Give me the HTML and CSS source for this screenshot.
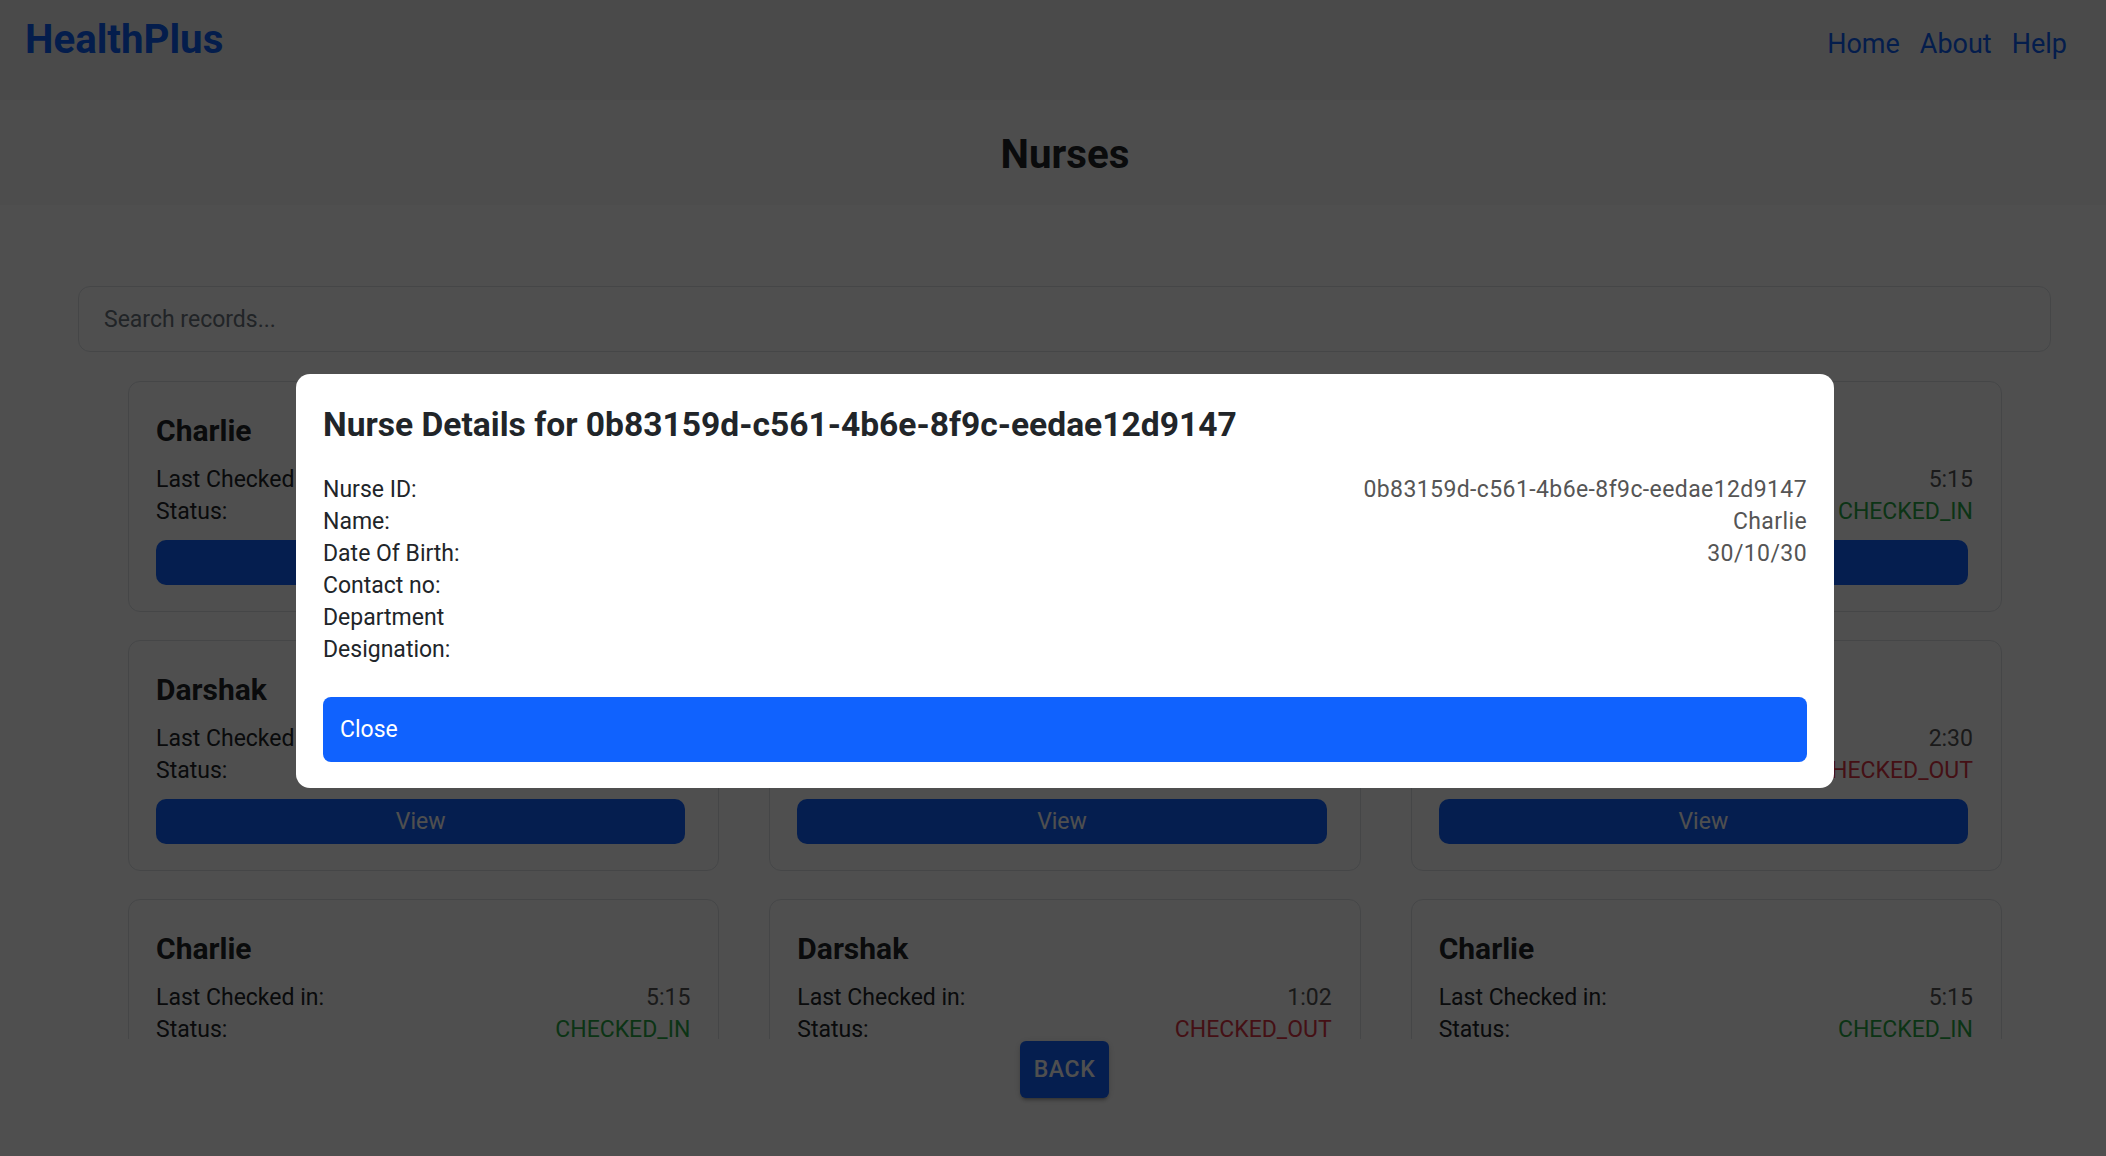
FILE: index.html
```html
<!DOCTYPE html>
<html lang="en">
<head>
<meta charset="utf-8">
<title>HealthPlus - Nurses</title>
<link rel="stylesheet" href="styles.css">
</head>
<body>
<div class="page">
  <header class="navbar">
    <a class="brand" href="#">HealthPlus</a>
    <nav class="links">
      <a href="#">Home</a>
      <a href="#">About</a>
      <a href="#">Help</a>
    </nav>
  </header>

  <section class="title-bar">
    <h1 class="page-title">Nurses</h1>
  </section>

  <main class="content">
    <input class="search" type="text" placeholder="Search records...">

    <div class="list">
      <div class="grid">
        <div class="card">
          <h2 class="card-title">Charlie</h2>
          <div class="row"><span class="label">Last Checked in:</span><span class="value">5:15</span></div>
          <div class="row"><span class="label">Status:</span><span class="status in">CHECKED_IN</span></div>
          <button class="view">View</button>
        </div>
        <div class="card">
          <h2 class="card-title">Darshak</h2>
          <div class="row"><span class="label">Last Checked in:</span><span class="value">1:02</span></div>
          <div class="row"><span class="label">Status:</span><span class="status out">CHECKED_OUT</span></div>
          <button class="view">View</button>
        </div>
        <div class="card">
          <h2 class="card-title">Charlie</h2>
          <div class="row"><span class="label">Last Checked in:</span><span class="value">5:15</span></div>
          <div class="row"><span class="label">Status:</span><span class="status in">CHECKED_IN</span></div>
          <button class="view">View</button>
        </div>

        <div class="card">
          <h2 class="card-title">Darshak</h2>
          <div class="row"><span class="label">Last Checked in:</span><span class="value">2:30</span></div>
          <div class="row"><span class="label">Status:</span><span class="status out">CHECKED_OUT</span></div>
          <button class="view">View</button>
        </div>
        <div class="card">
          <h2 class="card-title">Charlie</h2>
          <div class="row"><span class="label">Last Checked in:</span><span class="value">5:15</span></div>
          <div class="row"><span class="label">Status:</span><span class="status in">CHECKED_IN</span></div>
          <button class="view">View</button>
        </div>
        <div class="card">
          <h2 class="card-title">Darshak</h2>
          <div class="row"><span class="label">Last Checked in:</span><span class="value">2:30</span></div>
          <div class="row"><span class="label">Status:</span><span class="status out">CHECKED_OUT</span></div>
          <button class="view">View</button>
        </div>

        <div class="card">
          <h2 class="card-title">Charlie</h2>
          <div class="row"><span class="label">Last Checked in:</span><span class="value">5:15</span></div>
          <div class="row"><span class="label">Status:</span><span class="status in">CHECKED_IN</span></div>
          <button class="view">View</button>
        </div>
        <div class="card">
          <h2 class="card-title">Darshak</h2>
          <div class="row"><span class="label">Last Checked in:</span><span class="value">1:02</span></div>
          <div class="row"><span class="label">Status:</span><span class="status out">CHECKED_OUT</span></div>
          <button class="view">View</button>
        </div>
        <div class="card">
          <h2 class="card-title">Charlie</h2>
          <div class="row"><span class="label">Last Checked in:</span><span class="value">5:15</span></div>
          <div class="row"><span class="label">Status:</span><span class="status in">CHECKED_IN</span></div>
          <button class="view">View</button>
        </div>
      </div>
    </div>

    <div class="back-wrap">
      <button class="back">Back</button>
    </div>
  </main>

  <div class="overlay">
    <div class="modal">
      <h3 class="modal-title">Nurse Details for 0b83159d-c561-4b6e-8f9c-eedae12d9147</h3>
      <div class="details">
        <div class="row"><span class="label">Nurse ID:</span><span class="value">0b83159d-c561-4b6e-8f9c-eedae12d9147</span></div>
        <div class="row"><span class="label">Name:</span><span class="value">Charlie</span></div>
        <div class="row"><span class="label">Date Of Birth:</span><span class="value">30/10/30</span></div>
        <div class="row"><span class="label">Contact no:</span><span class="value"></span></div>
        <div class="row"><span class="label">Department</span><span class="value"></span></div>
        <div class="row"><span class="label">Designation:</span><span class="value"></span></div>
      </div>
      <button class="close">Close</button>
    </div>
  </div>
</div>
</body>
</html>
```

FILE: styles.css
```css
html, body {
  margin: 0;
  padding: 0;
  overflow: hidden;
  background: #ffffff;
}

body {
  font-family: Roboto, "Liberation Sans", Arial, sans-serif;
  font-size: 23px;
  color: #212529;
}

.page {
  position: relative;
  width: 2130px;
  min-height: 1156px;
  background: #ffffff;
}

/* Navbar */
.navbar {
  display: flex;
  align-items: baseline;
  justify-content: space-between;
  height: 100px;
  box-sizing: border-box;
  padding: 16px 63px 0 25px;
  background: #efefef;
}

.brand {
  font-size: 40.25px;
  font-weight: 700;
  line-height: normal;
  color: #0d5ef5;
  text-decoration: none;
}

.links {
  display: flex;
  gap: 20px;
}

.links a {
  font-size: 27px;
  line-height: normal;
  color: #0d5ef5;
  text-decoration: none;
}

/* Title */
.title-bar {
  height: 105px;
  box-sizing: border-box;
  padding-top: 31px;
  background: #f7f7f7;
  text-align: center;
}

.page-title {
  margin: 0;
  font-size: 40.25px;
  font-weight: 700;
  line-height: 1.2;
  color: #212529;
}

/* Content */
.content {
  padding: 81px 79px 0 78px;
}

.search {
  display: block;
  width: 100%;
  height: 66px;
  box-sizing: border-box;
  padding: 0 24px 0 25px;
  border: 1px solid #dee2e6;
  border-radius: 12px;
  font-family: inherit;
  font-size: 23px;
  color: #212529;
  background: #ffffff;
  outline: none;
}

.search::placeholder {
  color: #6c757d;
}

.list {
  height: 687px;
  box-sizing: border-box;
  overflow: hidden;
  padding: 29px 49px 0 50px;
}

.grid {
  display: grid;
  grid-template-columns: repeat(3, 1fr);
  column-gap: 50px;
  row-gap: 28px;
}

.card {
  border: 1px solid #dee2e6;
  border-radius: 12px;
  padding: 31px 28px 26px 27px;
  background: #ffffff;
}

.card-title {
  margin: 0 0 15px;
  font-size: 30px;
  font-weight: 700;
  line-height: 36px;
  color: #212529;
}

.row {
  display: flex;
  justify-content: space-between;
  line-height: 32px;
  font-size: 23px;
}

.label {
  color: #212529;
}

.value {
  color: #555555;
}

.status.in {
  color: #28a745;
}

.status.out {
  color: #dc3545;
}

.view {
  display: block;
  width: calc(100% - 5px);
  height: 45px;
  margin-top: 12px;
  border: none;
  border-radius: 10px;
  background: #1062fe;
  color: #ffffff;
  font-family: inherit;
  font-size: 23px;
}

.back-wrap {
  display: flex;
  justify-content: center;
  padding-top: 2px;
}

.back {
  height: 57px;
  padding: 0 13.5px;
  border: none;
  border-radius: 6px;
  background: #1062fe;
  color: #ffffff;
  font-family: inherit;
  font-size: 23px;
  font-weight: 500;
  letter-spacing: 0.6px;
  text-transform: uppercase;
  box-shadow: 0 4px 2px -3px rgba(0,0,0,0.2), 0 3px 3px 0 rgba(0,0,0,0.14), 0 1px 8px 0 rgba(0,0,0,0.12);
}

/* Modal overlay */
.overlay {
  position: absolute;
  top: 0;
  left: 0;
  width: 100%;
  height: 1156px;
  box-sizing: border-box;
  padding-top: 6px;
  display: flex;
  align-items: center;
  justify-content: center;
  background: rgba(0, 0, 0, 0.69);
}

.modal {
  width: 1538px;
  box-sizing: border-box;
  padding: 31px 27px 26px;
  background: #ffffff;
  border-radius: 14px;
}

.modal-title {
  margin: 0 0 28px;
  font-size: 33.6px;
  font-weight: 700;
  line-height: 1.2;
  color: #212529;
}

.details .row {
  line-height: 32px;
}

.details .value {
  letter-spacing: 0.4px;
}

.close {
  display: block;
  width: 100%;
  height: 65px;
  margin-top: 31px;
  padding: 0 17px;
  border: none;
  border-radius: 8px;
  background: #1062fe;
  color: #ffffff;
  font-family: inherit;
  font-size: 23px;
  text-align: left;
}
```
